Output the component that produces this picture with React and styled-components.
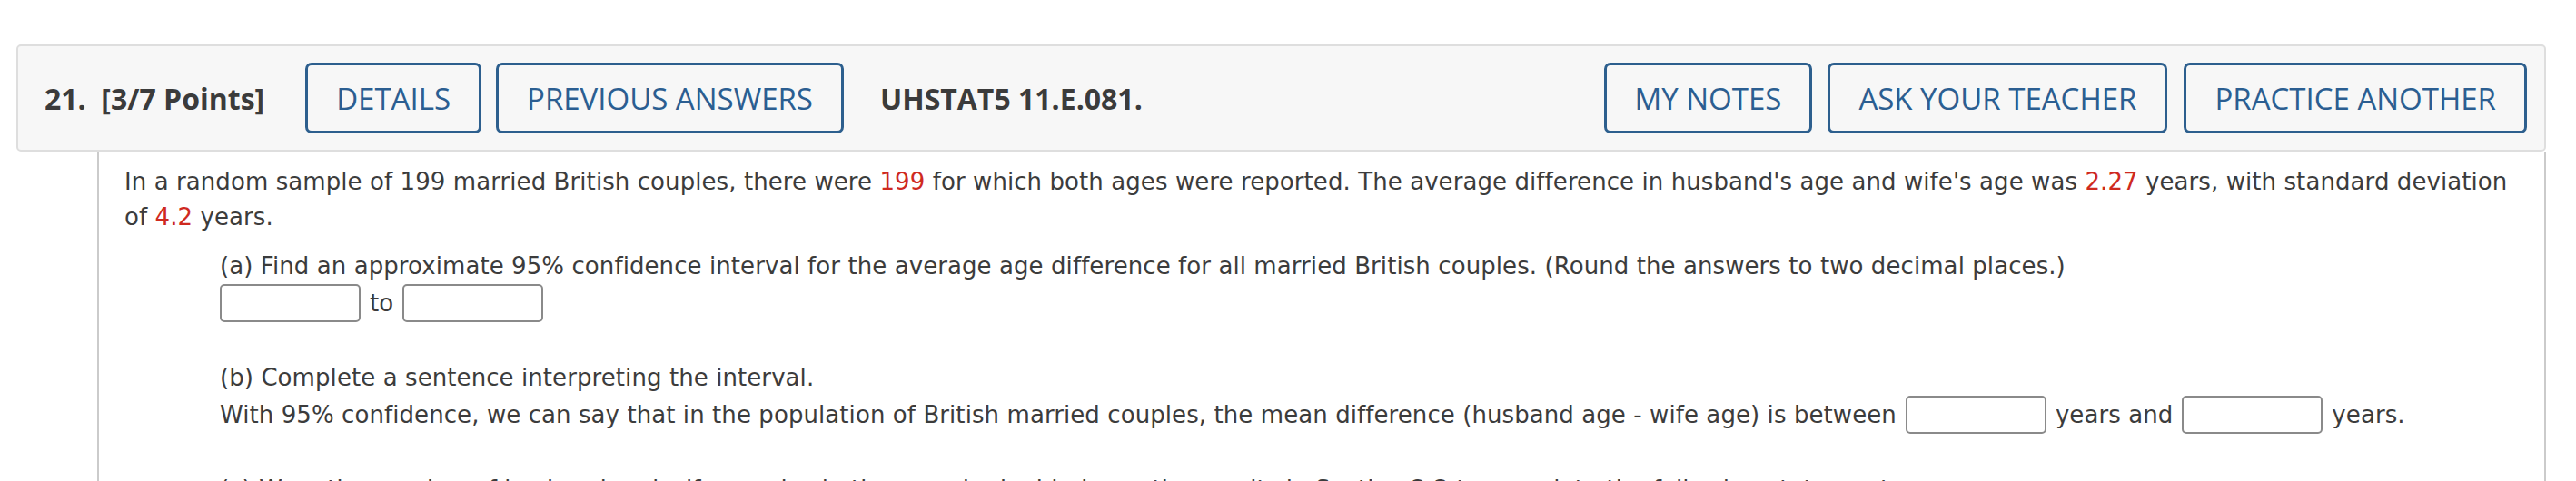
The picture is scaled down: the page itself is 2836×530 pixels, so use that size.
import React from 'react';
import styled, { createGlobalStyle } from 'styled-components';

const GlobalStyle = createGlobalStyle`
  body {
    margin: 0;
    background: #ffffff;
  }
`;

const Page = styled.div`
  padding: 49px 33px 0 18px;
`;

const Header = styled.div`
  display: flex;
  align-items: center;
  height: 114px;
  padding: 0 19px 0 29px;
  background: #f7f7f7;
  border: 2px solid #dedede;
  border-radius: 5px;
  font-family: 'Open Sans', 'Liberation Sans', sans-serif;
  color: #3b3b3b;
`;

const Title = styled.div`
  font-size: 32px;
  font-weight: 700;
  white-space: pre;
  margin-right: ${({ $gap }) => $gap || 0}px;
  margin-left: ${({ $left }) => $left || 0}px;
`;

const Button = styled.button`
  height: 78px;
  padding: 0 31px;
  margin-left: ${({ $gap }) => $gap ?? 17}px;
  background: #f7f7f7;
  border: 3px solid #2d5f8e;
  border-radius: 7px;
  color: #2b5e91;
  font-family: 'Open Sans', 'Liberation Sans', sans-serif;
  font-size: 33px;
  font-weight: 500;
  white-space: nowrap;
  cursor: pointer;
`;

const Spacer = styled.div`
  flex: 1;
`;

const Content = styled.div`
  margin-left: 89px;
  padding: 14px 38px 0 28px;
  border-left: 2px solid #cbcbcb;
  border-right: 2px solid #cbcbcb;
  height: 400px;
  overflow: hidden;
  font-family: Verdana, 'DejaVu Sans', sans-serif;
  font-size: 26px;
  line-height: 39px;
  letter-spacing: 0.08px;
  color: #3c3c3c;
`;

const Text = styled.div`
  margin-top: ${({ $top }) => $top || 0}px;
`;

const Part = styled.div`
  margin-left: 105px;
  margin-top: ${({ $top }) => $top || 0}px;
`;

const Row = styled.div`
  display: flex;
  align-items: center;
  height: 42px;
  white-space: pre;
`;

const Num = styled.span`
  color: #cf2a1f;
`;

const Answer = styled.input`
  box-sizing: border-box;
  width: 155px;
  height: 42px;
  margin: 0 10px 0 ${({ $first }) => ($first ? 0 : 10)}px;
  border: 2px solid #8a8a8a;
  border-radius: 5px;
  background: #ffffff;
  padding: 0 6px;
  font: inherit;
`;

export default function App() {
  return (
    <>
      <GlobalStyle />
      <Page>
        <Header>
          <Title $gap={28}>{'21.  [3/7 Points]'}</Title>
          <Button $gap={17}>DETAILS</Button>
          <Button $gap={16}>PREVIOUS ANSWERS</Button>
          <Title $left={40}>UHSTAT5 11.E.081.</Title>
          <Spacer />
          <Button $gap={0}>MY NOTES</Button>
          <Button $gap={17}>ASK YOUR TEACHER</Button>
          <Button $gap={18}>PRACTICE ANOTHER</Button>
        </Header>
        <Content>
          <Text>
            In a random sample of 199 married British couples, there were <Num>199</Num> for which
            both ages were reported. The average difference in husband's age and wife's age was{' '}
            <Num>2.27</Num> years, with standard deviation of <Num>4.2</Num> years.
          </Text>
          <Part $top={15}>
            <div>
              (a) Find an approximate 95% confidence interval for the average age difference for all
              married British couples. (Round the answers to two decimal places.)
            </div>
            <Row>
              <Answer $first type="text" aria-label="lower bound" />
              to
              <Answer type="text" aria-label="upper bound" />
            </Row>
          </Part>
          <Part $top={42}>
            <div>(b) Complete a sentence interpreting the interval.</div>
            <Row>
              With 95% confidence, we can say that in the population of British married couples, the
              mean difference (husband age - wife age) is between
              <Answer type="text" aria-label="interval start" />
              years and
              <Answer type="text" aria-label="interval end" />
              years.
            </Row>
          </Part>
          <Part $top={42}>
            <div>
              (c) Were the number of husband and wife couples in the sample doubled, use the results in
              Section 2.2 to complete the following statement.
            </div>
          </Part>
        </Content>
      </Page>
    </>
  );
}
